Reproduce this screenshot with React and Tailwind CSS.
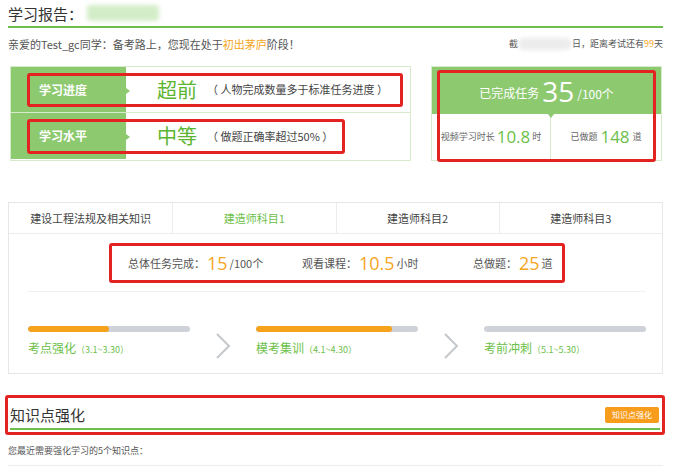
import { Fragment } from 'react';

const font = { fontFamily: '"Noto Sans CJK SC", "Noto Sans", sans-serif' };

const Chevron = () => (
  <svg width="18" height="28" viewBox="0 0 18 28" className="shrink-0 mt-[6px]">
    <polyline points="3,2 15,14 3,26" fill="none" stroke="#c4c8cc" strokeWidth="2" />
  </svg>
);

const stages = [
  { name: '考点强化', range: '（3.1~3.30）', pct: 50 },
  { name: '模考集训', range: '（4.1~4.30）', pct: 84 },
  { name: '考前冲刺', range: '（5.1~5.30）', pct: 0 },
];

const tabs = ['建设工程法规及相关知识', '建造师科目1', '建造师科目2', '建造师科目3'];

export default function App() {
  return (
    <div className="w-[677px] h-[467px] overflow-hidden bg-white text-[#333]" style={font}>
      <div className="pl-2 pr-[14px]">
        {/* 标题 */}
        <div className="h-[28px] flex items-center border-b-2 border-[#6cbf4a]">
          <span className="text-[15px] leading-none">学习报告：</span>
          <span className="ml-1 w-[72px] h-[16px] bg-[#d3edc8] rounded blur-[2px]" />
        </div>
        <div className="h-[32px] flex items-center justify-between text-[11px] text-[#555]">
          <span>
            亲爱的Test_gc同学：备考路上，您现在处于<span className="text-[#f5a623]">初出茅庐</span>阶段！
          </span>
          <span className="flex items-center text-[9px]">
            截<span className="w-[54px] h-[12px] bg-[#ececec] rounded-full blur-[2px]" />日，距离考试还有<span className="text-[#f5a623]">99</span>天
          </span>
        </div>

        {/* 概况 */}
        <div className="mt-[6px] flex gap-[20px]">
          <div className="ml-[2px] w-[401px] border border-[#d6ebcb]">
            {[
              { label: '学习进度', value: '超前', note: '（ 人物完成数量多于标准任务进度 ）', box: 'w-[376px]' },
              { label: '学习水平', value: '中等', note: '（ 做题正确率超过50% ）', box: 'w-[318px]' },
            ].map((r, i) => (
              <div key={r.label} className={`relative h-[46px] flex ${i === 0 ? 'border-b border-[#d6ebcb]' : ''}`}>
                <div className="relative w-[115px] bg-[#8dc96f] flex items-center pl-[28px] text-white text-[12px] font-bold">
                  {r.label}
                  <span className="absolute right-[-4px] top-[21px] w-0 h-0 border-y-[3px] border-y-transparent border-l-[4px] border-l-[#8dc96f]" />
                </div>
                <div className="flex items-center pl-[31px]">
                  <span className="text-[20px] text-[#5cb531] leading-none">{r.value}</span>
                  <span className="ml-[10px] text-[11px] text-[#444]">{r.note}</span>
                </div>
                <div className={`absolute left-[16px] top-[6px] bottom-[5px] ${r.box} border-[3px] border-[#e32222] rounded-[3px]`} />
              </div>
            ))}
          </div>

          <div className="relative w-[231px] border border-[#d6ebcb]">
            <div className="relative h-[47px] bg-[#8dc96f] flex items-center justify-center text-white">
              <span className="text-[12px] mt-[4px]">已完成任务</span>
              <span className="text-[28px] leading-none mx-[3px]" style={{ fontFamily: '"Open Sans", sans-serif' }}>35</span>
              <span className="text-[12px] mt-[6px]">/100个</span>
              <span className="absolute left-[116px] bottom-[-4px] w-0 h-0 border-x-[3px] border-x-transparent border-t-[4px] border-t-[#8dc96f]" />
            </div>
            <div className="flex h-[46px]">
              <div className="w-[119px] flex items-center justify-center border-r border-[#d6ebcb] text-[9px] text-[#666]">
                视频学习时长
                <span className="text-[17px] text-[#6cbf4a] mx-[2px]" style={{ fontFamily: '"Open Sans", sans-serif' }}>10.8</span>时
              </div>
              <div className="flex-1 flex items-center justify-center text-[9px] text-[#666]">
                已做题
                <span className="text-[17px] text-[#6cbf4a] mx-[3px]" style={{ fontFamily: '"Open Sans", sans-serif' }}>148</span>道
              </div>
            </div>
            <div className="absolute left-[5px] top-[3px] w-[219px] h-[92px] border-[3px] border-[#e32222] rounded-[3px]" />
          </div>
        </div>

        {/* 科目 */}
        <div className="mt-[41px] border border-[#e6e6e6]">
          <div className="grid grid-cols-4 h-[31px] border-b border-[#ececec] text-[11px]">
            {tabs.map((t, i) => (
              <div
                key={t}
                className={`flex items-center justify-center ${i > 0 ? 'border-l border-[#ececec]' : ''} ${i === 1 ? 'text-[#6cbf4a]' : 'text-[#444]'}`}
              >
                {t}
              </div>
            ))}
          </div>
          <div className="h-[139px] pl-[19px] pr-[16px]">
            <div className="flex justify-center pt-[9px] pb-[8px] border-b border-[#f0f0f0]">
              <div className="w-[456px] h-[40px] border-[3px] border-[#e32222] rounded-[3px] flex items-center pl-[16px] text-[11px] text-[#555]">
                {[
                  ['总体任务完成：', '15', ' /100个', 'w-[174px]'],
                  ['观看课程：', '10.5', '小时', 'w-[171px]'],
                  ['总做题：', '25', ' 道', ''],
                ].map(([a, b, c, w]) => (
                  <span key={a} className={`flex items-center ${w}`}>
                    {a}
                    <span className="text-[18px] text-[#f5a623] mx-[2px] leading-none" style={{ fontFamily: '"Open Sans", sans-serif' }}>{b}</span>
                    {c}
                  </span>
                ))}
              </div>
            </div>
            <div className="flex items-start justify-between mt-[34px]">
              {stages.map((s, i) => (
                <Fragment key={s.name}>
                  {i > 0 && <Chevron />}
                  <div className="w-[162px]">
                    <div className="h-[6px] rounded-full bg-[#cfd2d9] overflow-hidden">
                      <div className="h-full bg-[#f7a21b] rounded-full" style={{ width: `${s.pct}%` }} />
                    </div>
                    <div className="mt-[7px] text-[12px] text-[#6cbf4a] whitespace-nowrap">
                      {s.name}
                      <span className="text-[9px]">{s.range}</span>
                    </div>
                  </div>
                </Fragment>
              ))}
            </div>
          </div>
        </div>

        {/* 知识点强化 */}
        <div className="relative mt-[21px] -ml-[3px] w-[660px] h-[40px] border-[3px] border-[#e32222] rounded-[3px]">
          <div className="mx-[2px] mt-[3px] h-[29px] flex items-center justify-between border-b-2 border-[#6cbf4a]">
            <span className="text-[15px] text-[#333] leading-none">知识点强化</span>
            <span className="mr-[1px] px-[7px] h-[16px] flex items-center rounded-[2px] bg-[#f89c1c] text-white text-[8px]">知识点强化</span>
          </div>
        </div>
        <div className="mt-[9px] pb-[7px] text-[9px] text-[#555] border-b border-[#ececec]">
          您最近需要强化学习的5个知识点：
        </div>
      </div>
    </div>
  );
}
